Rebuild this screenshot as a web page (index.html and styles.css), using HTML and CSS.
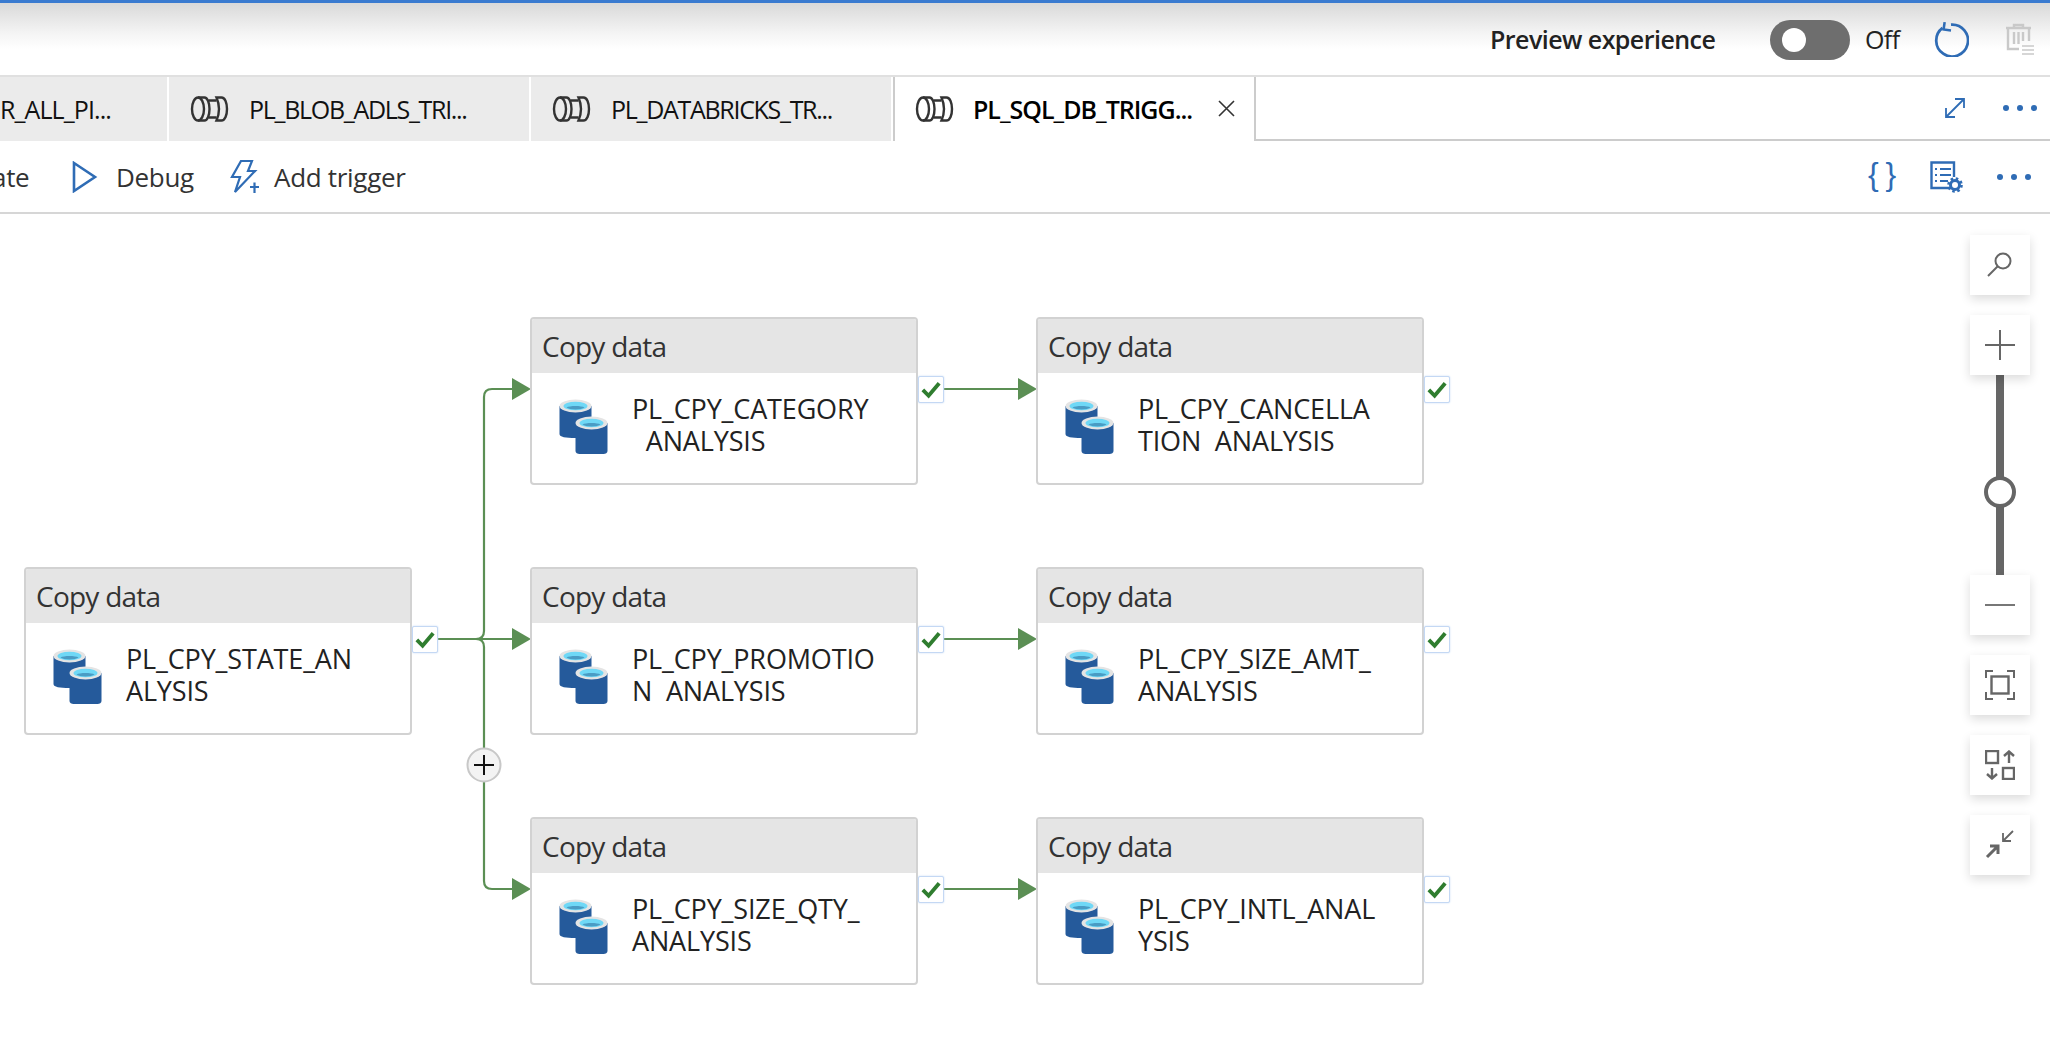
FILE: index.html
```html
<!DOCTYPE html>
<html lang="en">
<head>
<meta charset="utf-8">
<title>Pipeline editor</title>
<link rel="stylesheet" href="styles.css">
</head>
<body>
<svg class="defs" width="0" height="0" aria-hidden="true">
  <symbol id="pipe" viewBox="0 0 38 26">
    <g fill="none" stroke="#333" stroke-width="2.4">
      <ellipse cx="7.5" cy="13" rx="6" ry="11.5"/>
      <path d="M7.5 1.5H14C17 1.5 19 7 19 13S17 24.500 14 24.500H7.500"/>
      <path d="M18 4.500H26M18 21.500H26"/>
      <path d="M26 1.500H31C34.500 1.500 36.500 7 36.500 13S34.500 24.500 31 24.500H26C28 20 28.500 17 28.500 13S28 6 26 1.500Z"/>
    </g>
  </symbol>
  <symbol id="db" viewBox="0 0 48 55">
    <path fill="#255a9b" d="M0 7H32V35C32 38 26 39 16 39S0 38 0 35Z"/>
    <ellipse cx="16" cy="7" rx="16" ry="6.500" fill="#e4e4e4"/>
    <ellipse cx="16" cy="7" rx="12" ry="4.300" fill="#6fd8f6"/>
    <path fill="#4a9cc4" d="M7 8.500C10 6.500 22 6.500 25 8.500C22 11 10 11 7 8.500Z"/>
    <path fill="#255a9b" stroke="#fff" stroke-width="0" d="M16 24H48V52C48 54 46 55 44 55H20C18 55 16 54 16 52Z"/>
    <ellipse cx="32" cy="24" rx="16" ry="6.500" fill="#e4e4e4"/>
    <ellipse cx="32" cy="24" rx="12" ry="4.300" fill="#6fd8f6"/>
    <path fill="#4a9cc4" d="M23 25.500C26 23.500 38 23.500 41 25.500C38 28 26 28 23 25.500Z"/>
  </symbol>
  <symbol id="check" viewBox="0 0 25 25">
    <path d="M4 13L10 19L21 6" fill="none" stroke="#2f7d2f" stroke-width="4"/>
  </symbol>
</svg>

<div class="app">
  <header class="topbar">
    <span class="preview-label">Preview experience</span>
    <span class="toggle"><span class="toggle-knob"></span></span>
    <span class="toggle-text">Off</span>
    <svg class="icon-refresh" viewBox="0 0 34 34"><path d="M9 6.500A15 15 0 1 0 17 3.500" fill="none" stroke="#2f6cb5" stroke-width="2.600"/><path d="M11 1L10 8L17 9" fill="none" stroke="#2f6cb5" stroke-width="2.400"/></svg>
    <svg class="icon-trash" viewBox="0 0 30 32"><g fill="none" stroke="#c9c9c9" stroke-width="2.400"><path d="M1 5H26M9 5V2H18V5M3 5V26H14"/><path d="M24 5V18M9 9V21M13.500 9V21M18 9V18"/><path d="M17 23H29M17 27H29M17 31H29" stroke-width="1.400"/></g></svg>
  </header>

  <nav class="tabs">
    <div class="tab tab-cut"><span class="tab-label">R_ALL_PI...</span></div>
    <div class="tab"><svg class="tab-icon"><use href="#pipe"/></svg><span class="tab-label">PL_BLOB_ADLS_TRI...</span></div>
    <div class="tab"><svg class="tab-icon"><use href="#pipe"/></svg><span class="tab-label">PL_DATABRICKS_TR...</span></div>
    <div class="tab tab-active"><svg class="tab-icon"><use href="#pipe"/></svg><span class="tab-label">PL_SQL_DB_TRIGG...</span>
      <svg class="tab-close" viewBox="0 0 17 17"><path d="M1 1L16 16M16 1L1 16" stroke="#333" stroke-width="1.600"/></svg>
    </div>
    <div class="tabs-rest">
      <svg class="icon-expand" viewBox="0 0 22 22"><path d="M2 20L20 2M11 2H20V11M2 11V20H11" fill="none" stroke="#2f6cb5" stroke-width="1.800"/></svg>
      <span class="dots"><i></i><i></i><i></i></span>
    </div>
  </nav>

  <div class="toolbar">
    <span class="tool-cut">ate</span>
    <svg class="icon-play" viewBox="0 0 26 32"><path d="M2 2L23 16L2 30Z" fill="none" stroke="#2f6cb5" stroke-width="2.600"/></svg>
    <span class="tool-debug">Debug</span>
    <svg class="icon-trigger" viewBox="0 0 30 34"><g fill="none" stroke="#2f6cb5" stroke-width="2.200"><path d="M12 1H23L19 11H26L6 32L11 17H3Z"/><path d="M21 27H30M25.500 22.500V33"/></g></svg>
    <span class="tool-trigger">Add trigger</span>
    <div class="toolbar-right">
      <span class="icon-braces">{ }</span>
      <svg class="icon-doc" viewBox="0 0 33 32"><g fill="none" stroke="#2f6cb5"><path d="M21 27H1.500V1.500H24V16" stroke-width="2.400"/><path d="M5 8H7M10 8H21M5 14H7M10 14H21M5 20H7M10 20H18" stroke-width="2"/><circle cx="25" cy="24" r="4.500" stroke-width="3"/><circle cx="25" cy="24" r="6.500" stroke-width="2.600" stroke-dasharray="2.500 2.600"/></g></svg>
      <span class="dots"><i></i><i></i><i></i></span>
    </div>
  </div>

  <main class="canvas">
    <svg class="edges" viewBox="0 0 2050 834" width="2050" height="834">
      <g fill="none" stroke="#5b8f54" stroke-width="2.200">
        <path d="M438 425H514"/>
        <path d="M438 425H476Q484 425 484 417V183Q484 175 492 175H514"/>
        <path d="M476 425Q484 425 484 433V667Q484 675 492 675H514"/>
        <path d="M943 175H1020M943 425H1020M943 675H1020"/>
      </g>
      <g fill="#5b8f54">
        <path d="M512 164L531 175L512 186Z"/>
        <path d="M512 414L531 425L512 436Z"/>
        <path d="M512 664L531 675L512 686Z"/>
        <path d="M1018 164L1037 175L1018 186Z"/>
        <path d="M1018 414L1037 425L1018 436Z"/>
        <path d="M1018 664L1037 675L1018 686Z"/>
      </g>
      <circle cx="484" cy="551" r="16.500" fill="#f3f3f3" stroke="#c8c8c8" stroke-width="2"/>
      <path d="M484 541V561M474 551H494" stroke="#111" stroke-width="2"/>
    </svg>

    <article class="node col-a row-b">
      <div class="node-head">Copy data</div>
      <div class="node-body"><svg class="db-icon"><use href="#db"/></svg><div class="node-name">PL_CPY_STATE_AN<br>ALYSIS</div></div>
      <span class="status"><svg class="status-icon"><use href="#check"/></svg></span>
    </article>
    <article class="node col-b row-a">
      <div class="node-head">Copy data</div>
      <div class="node-body"><svg class="db-icon"><use href="#db"/></svg><div class="node-name">PL_CPY_CATEGORY<br>&nbsp;&nbsp;ANALYSIS</div></div>
      <span class="status"><svg class="status-icon"><use href="#check"/></svg></span>
    </article>
    <article class="node col-c row-a">
      <div class="node-head">Copy data</div>
      <div class="node-body"><svg class="db-icon"><use href="#db"/></svg><div class="node-name">PL_CPY_CANCELLA<br>TION&nbsp;&nbsp;ANALYSIS</div></div>
      <span class="status"><svg class="status-icon"><use href="#check"/></svg></span>
    </article>
    <article class="node col-b row-b">
      <div class="node-head">Copy data</div>
      <div class="node-body"><svg class="db-icon"><use href="#db"/></svg><div class="node-name">PL_CPY_PROMOTIO<br>N&nbsp;&nbsp;ANALYSIS</div></div>
      <span class="status"><svg class="status-icon"><use href="#check"/></svg></span>
    </article>
    <article class="node col-c row-b">
      <div class="node-head">Copy data</div>
      <div class="node-body"><svg class="db-icon"><use href="#db"/></svg><div class="node-name">PL_CPY_SIZE_AMT_<br>ANALYSIS</div></div>
      <span class="status"><svg class="status-icon"><use href="#check"/></svg></span>
    </article>
    <article class="node col-b row-c">
      <div class="node-head">Copy data</div>
      <div class="node-body"><svg class="db-icon"><use href="#db"/></svg><div class="node-name">PL_CPY_SIZE_QTY_<br>ANALYSIS</div></div>
      <span class="status"><svg class="status-icon"><use href="#check"/></svg></span>
    </article>
    <article class="node col-c row-c">
      <div class="node-head">Copy data</div>
      <div class="node-body"><svg class="db-icon"><use href="#db"/></svg><div class="node-name">PL_CPY_INTL_ANAL<br>YSIS</div></div>
      <span class="status"><svg class="status-icon"><use href="#check"/></svg></span>
    </article>

    <aside class="zoom-controls">
      <button class="zoom-btn"><svg viewBox="0 0 30 30"><circle cx="18" cy="11" r="7.500" fill="none" stroke="#666" stroke-width="2"/><path d="M13 16L3 26" stroke="#666" stroke-width="2"/></svg></button>
      <div class="zoom-group">
        <button class="zoom-btn"><svg viewBox="0 0 30 30"><path d="M15 0V30M0 15H30" stroke="#666" stroke-width="2"/></svg></button>
        <div class="slider"><span class="slider-knob"></span></div>
        <button class="zoom-btn"><svg viewBox="0 0 30 30"><path d="M0 15H30" stroke="#777" stroke-width="2"/></svg></button>
      </div>
      <button class="zoom-btn"><svg viewBox="0 0 30 30"><g fill="none" stroke="#666" stroke-width="2"><path d="M1 8V1H8M22 1H29V8M1 22V29H8M22 29H29V22"/><rect x="6.500" y="6.500" width="17" height="17" stroke-width="2.400"/></g></svg></button>
      <button class="zoom-btn"><svg viewBox="0 0 30 30"><g fill="none" stroke="#666" stroke-width="2.400"><rect x="1" y="1" width="12" height="12"/><rect x="18" y="18" width="11" height="11"/><path d="M24 13V2M19 6L24 1.500L29 6M7 18V29M2 24L7 28.500L12 24"/></g></svg></button>
      <button class="zoom-btn"><svg viewBox="0 0 30 30"><g fill="none" stroke="#666"><path d="M28 1L18 11M18 3V11H26" stroke-width="1.800"/><path d="M2 27L12 17M5 16H13V24" stroke-width="3"/></g></svg></button>
    </aside>
  </main>
</div>
</body>
</html>
```
FILE: styles.css
```css
* { box-sizing: border-box; }
html, body { margin: 0; height: 100%; background: #fff; overflow: hidden; }
body { font-family: "Open Sans", "Noto Sans", sans-serif; color: #222; }
.defs { position: absolute; }
.app { display: flex; flex-direction: column; width: 2050px; height: 1048px; }

.topbar {
  display: flex; align-items: center; height: 77px; flex: none;
  border-top: 3px solid #3a7bd0; border-bottom: 2px solid #e0e0e0;
  background: linear-gradient(#d9d9d9 0, #f4f4f4 30px, #fff 46px);
  padding-left: 1490px;
}
.preview-label { font-size: 25px; font-weight: 600; letter-spacing: -.55px; color: #222; width: 280px; white-space: nowrap; }
.toggle { width: 80px; height: 40px; border-radius: 20px; background: #6e6e6e; display: flex; align-items: center; padding-left: 12px; margin-top: 2px; flex: none; }
.toggle-knob { width: 24px; height: 24px; border-radius: 50%; background: #fff; }
.toggle-text { font-size: 25px; letter-spacing: -.6px; margin-left: 15px; width: 68px; }
.icon-refresh { width: 36px; height: 36px; flex: none; }
.icon-trash { width: 30px; height: 32px; margin-left: 36px; flex: none; }

.tabs { display: flex; height: 64px; flex: none; }
.tab {
  display: flex; align-items: center; width: 362px; flex: none;
  background: #ebebeb; border-right: 2px solid #fff; padding-left: 20px; padding-bottom: 1px;
}
.tab-cut { width: 169px; padding-left: 0; justify-content: flex-end; padding-right: 56px; }
.tab-cut .tab-label { letter-spacing: -.9px; }
.tab-icon { width: 41px; height: 26px; flex: none; margin-right: 19px; }
.tab-label { font-size: 25px; letter-spacing: -1.3px; white-space: nowrap; color: #111; }
.tab-active { background: #fff; border-left: 2px solid #ccc; border-right: 2px solid #ccc; width: 363px; padding-left: 19px; }
.tab-active .tab-icon { margin-right: 18px; }
.tab-active .tab-label { font-weight: 600; letter-spacing: -1px; color: #000; }
.tab-close { width: 17px; height: 17px; margin-left: 26px; flex: none; }
.tabs-rest { flex: 1; border-bottom: 2px solid #ccc; display: flex; align-items: center; padding-left: 688px; }
.icon-expand { width: 22px; height: 22px; flex: none; margin-right: 37px; }
.dots { display: flex; gap: 8px; }
.dots i { width: 6px; height: 6px; border-radius: 50%; background: #2f6cb5; display: block; }

.toolbar {
  display: flex; align-items: center; height: 73px; flex: none;
  border-bottom: 2px solid #d6d6d6; font-size: 26px; letter-spacing: -.3px; color: #333;
}
.tool-cut { margin-left: -8px; width: 80px; flex: none; }
.icon-play { width: 26px; height: 32px; flex: none; }
.tool-debug { margin-left: 18px; width: 113px; flex: none; }
.icon-trigger { width: 30px; height: 34px; flex: none; }
.tool-trigger { margin-left: 15px; color: #333; }
.toolbar-right { margin-left: auto; display: flex; align-items: center; padding-right: 19px; }
.icon-braces { font-size: 32px; color: #2f6cb5; letter-spacing: -1px; width: 62px; white-space: nowrap; font-family: "Liberation Sans", sans-serif; margin-top: -4px; }
.icon-doc { width: 33px; height: 32px; flex: none; margin-right: 34px; }

.canvas { position: relative; flex: 1; overflow: hidden; }
.edges { position: absolute; left: 0; top: 0; }

.node {
  position: absolute; width: 388px; height: 168px;
  background: #fff; border: 2px solid #d2d2d2; border-radius: 4px;
}
.col-a { left: 24px; }
.col-b { left: 530px; }
.col-c { left: 1036px; }
.row-a { top: 103px; }
.row-b { top: 353px; }
.row-c { top: 603px; }
.node-head {
  height: 54px; background: #e5e5e5; font-size: 28px; letter-spacing: -.75px; color: #333;
  padding-left: 10px; line-height: 54px; border-radius: 2px 2px 0 0;
}
.node-body { display: flex; padding: 26px 0 0 27px; }
.db-icon { width: 49px; height: 55px; flex: none; margin-right: 24px; }
.node-name { font-size: 27px; line-height: 32px; letter-spacing: -.15px; color: #222; white-space: nowrap; margin-top: -6px; }
.status {
  position: absolute; left: 100%; top: 57px; margin-left: 2px; width: 26px; height: 27px;
  background: #fff; border: 1px solid #c4d8f4; box-shadow: 0 0 2px #c4d8f4; border-radius: 2px; display: block;
}
.status-icon { width: 24px; height: 25px; display: block; }

.zoom-controls { position: absolute; left: 1970px; top: 21px; display: flex; flex-direction: column; gap: 20px; }
.zoom-group { display: flex; flex-direction: column; align-items: center; }
.zoom-btn {
  width: 60px; height: 60px; padding: 0; border: 0; background: #fff;
  box-shadow: 0 4px 10px rgba(0,0,0,.14); display: flex; align-items: center; justify-content: center; position: relative; z-index: 1;
}
.zoom-btn svg { width: 30px; height: 30px; display: block; }
.slider { width: 8px; height: 200px; background: #666; position: relative; }
.slider-knob {
  position: absolute; left: -12px; top: 101px; width: 32px; height: 32px;
  background: #fff; border: 4px solid #666; border-radius: 50%;
}
```
